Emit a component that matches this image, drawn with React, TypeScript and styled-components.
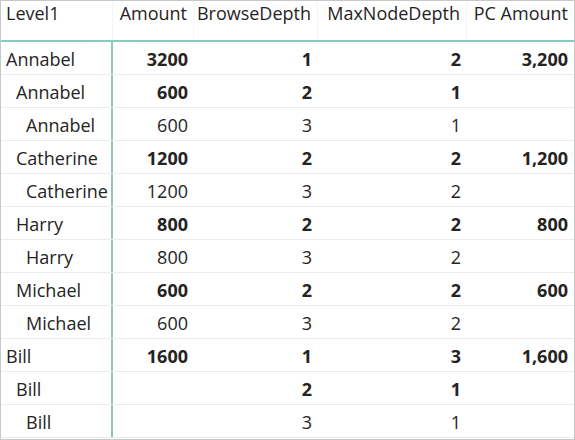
import React from "react";
import styled, { createGlobalStyle } from "styled-components";

const Global = createGlobalStyle`
  html, body { margin: 0; padding: 0; background: #ffffff; }
  body { font-family: "Open Sans", "Noto Sans", sans-serif; }
`;

const COLS = "112px 81px 124px 149px 107px";

const Frame = styled.div`
  width: 575px;
  height: 440px;
  box-sizing: border-box;
  border: 1px solid #c8c8c8;
  background: #ffffff;
  overflow: hidden;
  color: #252423;
  font-family: "Open Sans", "Noto Sans", sans-serif;
  font-size: 18px;
`;

const HeaderRow = styled.div`
  display: grid;
  grid-template-columns: ${COLS};
  height: 39px;
  border-bottom: 2px solid #8cc8be;
`;

const HeaderCell = styled.div<{ $align: "left" | "right"; $last?: boolean }>`
  padding: 0 ${(p) => (p.$align === "left" ? "0" : "6px")} 0
    ${(p) => (p.$align === "left" ? "5px" : "0")};
  text-align: ${(p) => p.$align};
  line-height: 24px;
  white-space: nowrap;
  border-right: ${(p) => (p.$last ? "none" : "1px solid #f5f5f5")};
`;

const Row = styled.div`
  display: grid;
  grid-template-columns: ${COLS};
  height: 33px;
  box-sizing: border-box;
  border-bottom: 1px solid #ebebeb;
`;

const LabelCell = styled.div<{ $level: number }>`
  display: flex;
  align-items: center;
  padding-top: 2px;
  padding-left: ${(p) => 5 + (p.$level - 1) * 10}px;
  border-right: 2px solid #8cc8be;
  white-space: nowrap;
`;

const NumCell = styled.div<{ $bold: boolean }>`
  display: flex;
  align-items: center;
  justify-content: flex-end;
  padding-top: 2px;
  padding-right: 6px;
  font-weight: ${(p) => (p.$bold ? 700 : 400)};
  white-space: nowrap;
`;

type R = {
  label: string;
  level: number;
  amount: string;
  browse: string;
  maxd: string;
  pc: string;
};

const rows: R[] = [
  { label: "Annabel", level: 1, amount: "3200", browse: "1", maxd: "2", pc: "3,200" },
  { label: "Annabel", level: 2, amount: "600", browse: "2", maxd: "1", pc: "" },
  { label: "Annabel", level: 3, amount: "600", browse: "3", maxd: "1", pc: "" },
  { label: "Catherine", level: 2, amount: "1200", browse: "2", maxd: "2", pc: "1,200" },
  { label: "Catherine", level: 3, amount: "1200", browse: "3", maxd: "2", pc: "" },
  { label: "Harry", level: 2, amount: "800", browse: "2", maxd: "2", pc: "800" },
  { label: "Harry", level: 3, amount: "800", browse: "3", maxd: "2", pc: "" },
  { label: "Michael", level: 2, amount: "600", browse: "2", maxd: "2", pc: "600" },
  { label: "Michael", level: 3, amount: "600", browse: "3", maxd: "2", pc: "" },
  { label: "Bill", level: 1, amount: "1600", browse: "1", maxd: "3", pc: "1,600" },
  { label: "Bill", level: 2, amount: "", browse: "2", maxd: "1", pc: "" },
  { label: "Bill", level: 3, amount: "", browse: "3", maxd: "1", pc: "" },
];

export default function App() {
  return (
    <>
      <Global />
      <Frame>
        <HeaderRow>
          <HeaderCell $align="left">Level1</HeaderCell>
          <HeaderCell $align="right">Amount</HeaderCell>
          <HeaderCell $align="right">BrowseDepth</HeaderCell>
          <HeaderCell $align="right">MaxNodeDepth</HeaderCell>
          <HeaderCell $align="right" $last>
            PC Amount
          </HeaderCell>
        </HeaderRow>
        {rows.map((r, i) => {
          const bold = r.level < 3;
          return (
            <Row key={i}>
              <LabelCell $level={r.level}>{r.label}</LabelCell>
              <NumCell $bold={bold}>{r.amount}</NumCell>
              <NumCell $bold={bold}>{r.browse}</NumCell>
              <NumCell $bold={bold}>{r.maxd}</NumCell>
              <NumCell $bold={bold}>{r.pc}</NumCell>
            </Row>
          );
        })}
      </Frame>
    </>
  );
}
